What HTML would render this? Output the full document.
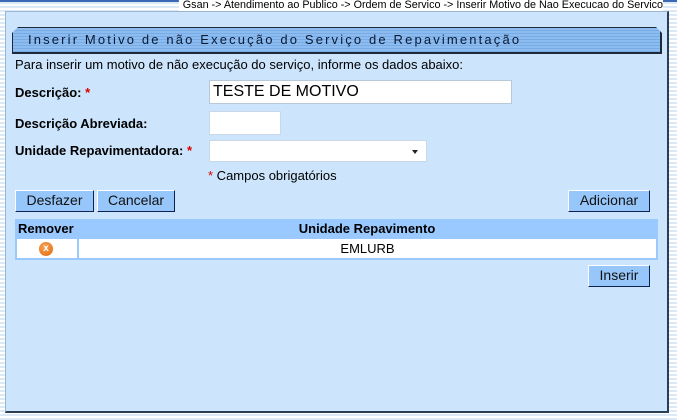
<!DOCTYPE html>
<html><head><meta charset="utf-8"><style>
*{margin:0;padding:0;box-sizing:border-box}
body{width:677px;height:420px;overflow:hidden;font-family:"Liberation Sans",Arial,sans-serif;font-size:13px;color:#000;
background:repeating-linear-gradient(#fff 0 2px,#dbe9f6 2px 4px);position:relative}
.a{position:absolute}
.top{left:0;top:0;width:677px;height:2px;background:#3b68b4}
.gold{left:410px;top:0;width:220px;height:2px;background:#ffc20e}
.bc{right:14px;top:0;height:11px;background:#fff;font-size:11px;line-height:11px;padding-left:4px;white-space:nowrap;transform:scaleX(.98);transform-origin:right}
.panel{left:5px;top:11px;width:664px;height:402px;background:#cce4fc;border-left:1px solid #9bb6d1;border-top:1px solid #9bb6d1;border-right:2px solid #2c3e55;border-bottom:2px solid #2c3e55}
.title{left:12px;top:27px;width:650px;height:27px;border:1px solid #1e2a3a;border-right:2px solid #1e2a3a;border-bottom:2px solid #1e2a3a;
background:repeating-linear-gradient(#8dbcf0 0 2px,#78aae3 2px 3px);clip-path:polygon(6px 0,calc(100% - 6px) 0,100% 6px,100% 100%,0 100%,0 6px);
font-size:13px;letter-spacing:2.15px;line-height:24px;padding-left:15px;color:#0b1a33}
.lbl{font-weight:bold;font-size:13px}
.req{color:#d00}
.btn{position:absolute;height:22px;background:#97c7fa;border:1px solid;border-color:#fff #0f2150 #0f2150 #fff;font-size:14px;line-height:19px;text-align:center;color:#111}
</style></head><body>
<div class="a top"></div><div class="a gold"></div>
<div class="a bc">Gsan -&gt; Atendimento ao Publico -&gt; Ordem de Servico -&gt; Inserir Motivo de Nao Execucao do Servico</div>
<div class="a panel"></div>
<div class="a title">Inserir Motivo de não Execução do Serviço de Repavimentação</div>
<div class="a" style="left:15px;top:57px">Para inserir um motivo de não execução do serviço, informe os dados abaixo:</div>
<div class="a lbl" style="left:15px;top:85px">Descrição: <span class="req">*</span></div>
<div class="a" style="left:209px;top:80px;width:303px;height:24px;background:#fff;border:1px solid #b8c8d8;font-size:16px;line-height:22px;padding-left:3px">TESTE DE MOTIVO</div>
<div class="a lbl" style="left:15px;top:116px">Descrição Abreviada:</div>
<div class="a" style="left:209px;top:111px;width:72px;height:24px;background:#fff;border:1px solid #c8d8e8"></div>
<div class="a lbl" style="left:15px;top:143px">Unidade Repavimentadora: <span class="req">*</span></div>
<div class="a" style="left:209px;top:140px;width:218px;height:22px;background:#fff;border:1px solid #c8d8e8"></div>
<div class="a" style="left:412px;top:150px;width:0;height:0;border-left:3.5px solid transparent;border-right:3.5px solid transparent;border-top:4px solid #222"></div>
<div class="a" style="left:208px;top:168px"><span class="req">*</span> Campos obrigatórios</div>
<div class="btn" style="left:15px;top:190px;width:79px">Desfazer</div>
<div class="btn" style="left:97px;top:190px;width:78px">Cancelar</div>
<div class="btn" style="left:568px;top:190px;width:82px">Adicionar</div>
<div class="a" style="left:15px;top:219px;width:643px;height:41px;background:#99c9ff"></div>
<div class="a lbl" style="left:18px;top:221px">Remover</div>
<div class="a lbl" style="left:79px;top:221px;width:576px;text-align:center">Unidade Repavimento</div>
<div class="a" style="left:17px;top:239px;width:60px;height:19px;background:#fff"></div>
<div class="a" style="left:79px;top:239px;width:577px;height:19px;background:#fff;text-align:center;line-height:19px">EMLURB</div>
<div class="a" style="left:39px;top:242px;width:14px;height:14px;border-radius:50%;background:radial-gradient(circle at 40% 35%,#f7a050,#e06a10);color:#fff;font-size:10px;font-weight:bold;text-align:center;line-height:14px">x</div>
<div class="btn" style="left:588px;top:265px;width:62px">Inserir</div>
</body></html>
